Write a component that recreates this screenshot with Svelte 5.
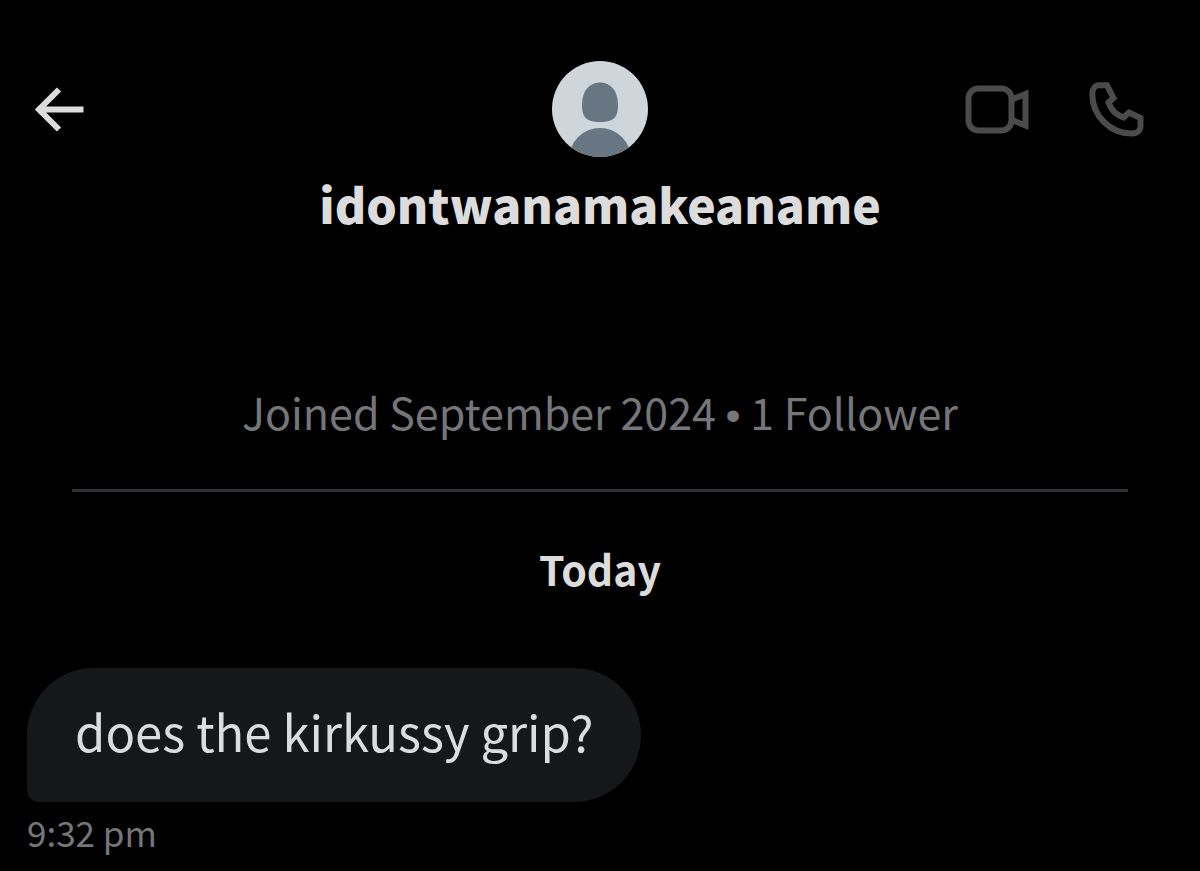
<script lang="ts">
    const user = {
        name: 'idontwanamakeaname',
        joined: 'Joined September 2024',
        followers: '1 Follower',
    };

    const days = [
        {
            label: 'Today',
            messages: [{ text: 'does the kirkussy grip?', time: '9:32 pm' }],
        },
    ];
</script>

<div class="conversation">
    <header class="top-bar">
        <div class="left-buttons">
            <button class="icon-btn" type="button" aria-label="Back">
                <svg width="52" height="48" viewBox="33 85 52 48" fill="none" stroke="#dcdcdc" stroke-width="6">
                    <path d="M59 89.5L39 109.5L59 129.5M38 109.5H83.5" />
                </svg>
            </button>
        </div>

        <svg class="avatar" viewBox="0 0 96 96" role="img" aria-label="Profile picture">
            <clipPath id="avatar-clip"><circle cx="48" cy="48" r="48" /></clipPath>
            <g clip-path="url(#avatar-clip)">
                <rect width="96" height="96" fill="#ced6dc" />
                <path d="M48 21.500C58 21.500 66 29 66 44C66 56 62 61 48 61S30 56 30 44C30 29 38 21.500 48 21.500Z" fill="#687683" />
                <circle cx="48" cy="98" r="31" fill="#687683" />
            </g>
        </svg>

        <div class="right-buttons">
            <button class="icon-btn" type="button" aria-label="Video call">
                <svg width="66" height="56" viewBox="964 81 66 56" fill="none" stroke="#4b4b4b" stroke-width="6">
                    <rect x="968.5" y="88.5" width="43" height="42" rx="10" />
                    <path d="M1012 99.500L1025.500 94V125.500L1012 120" />
                </svg>
            </button>
            <button class="icon-btn" type="button" aria-label="Voice call">
                <svg width="56" height="56" viewBox="1088 81 56 56" fill="none" stroke="#4b4b4b" stroke-width="6">
                    <path d="M1099 85.300H1107L1113.500 98L1108.500 102.500C1111 110 1116.500 115 1123.500 117.500L1129 112.500L1140.500 118V126C1140.500 130.500 1137 133.500 1132 133.500C1110 133.500 1092.300 116 1092.300 94C1092.300 89 1095 85.300 1099 85.300Z" />
                </svg>
            </button>
        </div>
    </header>

    <h1>{user.name}</h1>

    <p class="about">{user.joined} <span class="dot">•</span> {user.followers}</p>

    {#each days as day}
        <section>
            <h2>{day.label}</h2>
            {#each day.messages as message}
                <div class="message">
                    <p class="bubble">{message.text}</p>
                    <time>{message.time}</time>
                </div>
            {/each}
        </section>
    {/each}
</div>

<style>
    :global(body) {
        margin: 0;
        background-color: #000;
    }

    .conversation {
        padding: 61px 27px 10px;
        color: #dcdcdc;
        font-family: "Noto Sans CJK SC", "Noto Sans", sans-serif;
    }

    .top-bar {
        display: grid;
        grid-template-columns: 1fr 96px 1fr;
        align-items: center;
    }

    .left-buttons,
    .right-buttons {
        display: flex;
        align-items: center;
    }

    .left-buttons {
        padding-left: 6px;
    }

    .right-buttons {
        justify-content: flex-end;
        gap: 58px;
        padding-right: 29px;
    }

    .icon-btn {
        display: flex;
        padding: 0;
        border: none;
        background: none;
        cursor: pointer;
    }

    .avatar {
        width: 96px;
        height: 96px;
    }

    h1,
    h2,
    p {
        margin: 0;
    }

    h1 {
        margin-top: 14px;
        font-size: 48px;
        font-weight: 900;
        line-height: 64px;
        text-align: center;
    }

    .about {
        margin: 144px 45px 0;
        padding-bottom: 46px;
        border-bottom: 3px solid #2f3136;
        color: #75767a;
        font-size: 43px;
        line-height: 64px;
        text-align: center;
    }

    /* the CJK family draws a full-width bullet */
    .dot {
        font-family: "Liberation Sans", sans-serif;
        line-height: 1;
    }

    h2 {
        margin: 44px 0 68px;
        font-size: 41px;
        font-weight: 700;
        line-height: 64px;
        text-align: center;
    }

    .message {
        display: flex;
        flex-direction: column;
        align-items: flex-start;
    }

    .bubble {
        padding: 31px 48px 39px;
        border-radius: 67px 67px 67px 12px;
        background-color: #161719;
        font-size: 49px;
        line-height: 64px;
    }

    time {
        margin-top: 6px;
        color: #75767a;
        font-size: 35px;
        line-height: 48px;
    }
</style>
